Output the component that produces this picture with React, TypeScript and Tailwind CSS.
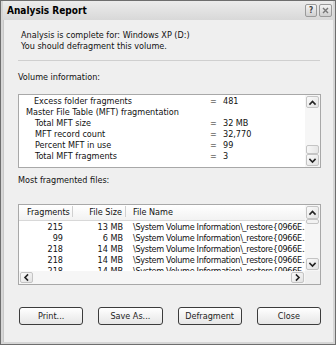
import React from "react";

const FONT = '"DejaVu Sans Condensed", "Liberation Sans", sans-serif';

function Chevron({ dir }: { dir: "up" | "down" | "left" | "right" }) {
  const paths: Record<string, string> = {
    up: "M2 6 L4.5 3.5 L7 6",
    down: "M2 3.5 L4.5 6 L7 3.5",
    left: "M5.5 2 L3 4.5 L5.5 7",
    right: "M3.5 2 L6 4.5 L3.5 7",
  };
  return (
    <svg width="9" height="9" viewBox="0 0 9 9">
      <path d={paths[dir]} fill="none" stroke="#222" strokeWidth="1.6" strokeLinecap="square" />
    </svg>
  );
}

function SBtn({ dir, cls = "" }: { dir: "up" | "down" | "left" | "right"; cls?: string }) {
  return (
    <div
      className={
        "flex items-center justify-center rounded-[2px] border border-[#c4c4c4] bg-gradient-to-br from-[#fbfbfb] to-[#e2e2e2] shrink-0 " +
        cls
      }
    >
      <Chevron dir={dir} />
    </div>
  );
}

const volRows: { label: string; indent: number; value?: string }[] = [
  { label: "Excess folder fragments", indent: 15, value: "481" },
  { label: "Master File Table (MFT) fragmentation", indent: 7 },
  { label: "Total MFT size", indent: 16, value: "32 MB" },
  { label: "MFT record count", indent: 16, value: "32,770" },
  { label: "Percent MFT in use", indent: 16, value: "99" },
  { label: "Total MFT fragments", indent: 16, value: "3" },
];

const files = [
  { frag: "215", size: "13 MB" },
  { frag: "99", size: "6 MB" },
  { frag: "218", size: "14 MB" },
  { frag: "218", size: "14 MB" },
  { frag: "218", size: "14 MB" },
];

function Button({ label }: { label: string }) {
  return (
    <div className="w-[65px] h-[18px] rounded-[3px] border border-[#3c3c3c] bg-gradient-to-b from-[#ffffff] to-[#e6e6e6] flex items-center justify-center text-[#222]">
      {label}
    </div>
  );
}

export default function App() {
  return (
    <div
      className="w-[336px] h-[345px] bg-[#6e6e6e] p-[1px] text-[9px] text-[#111] leading-[11px]"
      style={{ fontFamily: FONT }}
    >
      <div className="w-full h-full flex flex-col bg-[#d6d6d6] px-[2px] pb-[2px]">
        {/* title bar */}
        <div className="h-[19px] flex items-center justify-between pl-[4px] pr-[1px] bg-gradient-to-b from-[#ececec] to-[#d8d8d8] shrink-0">
          <span className="font-bold text-[10px] text-black">Analysis Report</span>
          <div className="flex gap-[2px]">
            <div className="w-[12px] h-[13px] rounded-[2px] border border-[#9a9a9a] bg-gradient-to-b from-[#f4f4f4] to-[#d0d0d0] flex items-center justify-center text-[8px] font-bold text-[#444]">
              ?
            </div>
            <div className="w-[13px] h-[13px] rounded-[2px] border border-[#9a9a9a] bg-gradient-to-b from-[#f4f4f4] to-[#cfcfcf] flex items-center justify-center">
              <svg width="7" height="7" viewBox="0 0 7 7">
                <path d="M1 1 L6 6 M6 1 L1 6" stroke="#777" strokeWidth="1.4" />
              </svg>
            </div>
          </div>
        </div>
        {/* body */}
        <div className="flex-1 flex flex-col bg-[#efefef] pl-[14px] pr-[12px] border-l border-[#c8c8c8]">
          <div className="pl-[3px] mt-[10px]">
            <div>Analysis is complete for: Windows XP (D:)</div>
            <div>You should defragment this volume.</div>
          </div>
          <div className="mt-[8px] h-[1px] bg-[#cfcfcf] mr-[1px]" />
          <div className="mt-[11px]">Volume information:</div>
          {/* volume listbox */}
          <div className="mt-[11px] h-[74px] border border-[#a8a8a8] bg-white flex">
            <div className="flex-1 pt-[1px] overflow-hidden">
              {volRows.map((r, i) => (
                <div key={i} className="flex h-[11px] whitespace-nowrap">
                  <div className="w-[191px] shrink-0" style={{ paddingLeft: r.indent }}>
                    {r.label}
                  </div>
                  {r.value !== undefined && (
                    <>
                      <div className="w-[13px] shrink-0">=</div>
                      <div>{r.value}</div>
                    </>
                  )}
                </div>
              ))}
            </div>
            <div className="w-[15px] flex flex-col bg-[#f6f6f6] p-[1px] gap-0">
              <SBtn dir="up" cls="h-[12px]" />
              <div className="flex-1 flex flex-col justify-end">
                <div className="h-[9px] rounded-[2px] border border-[#c4c4c4] bg-gradient-to-r from-[#f7f7f7] to-[#e6e6e6]" />
              </div>
              <SBtn dir="down" cls="h-[12px]" />
            </div>
          </div>
          <div className="mt-[7px]">Most fragmented files:</div>
          {/* list view */}
          <div className="mt-[18px] h-[81px] border border-[#a8a8a8] bg-white flex flex-col">
            <div className="flex-1 flex min-h-0">
              <div className="flex-1 flex flex-col overflow-hidden">
                <div className="h-[16px] flex items-center border-b border-[#d8d8d8] bg-gradient-to-b from-[#ffffff] to-[#f2f2f2] shrink-0 whitespace-nowrap">
                  <div className="w-[54px] shrink-0 pl-[8px] relative">
                    Fragments
                    <div className="absolute right-0 top-[-1px] h-[11px] w-[1px] bg-[#d0d0d0]" />
                  </div>
                  <div className="w-[53px] shrink-0 pr-[4px] text-right relative">
                    File Size
                    <div className="absolute right-0 top-[-1px] h-[11px] w-[1px] bg-[#d0d0d0]" />
                  </div>
                  <div className="pl-[7px] shrink-0">File Name</div>
                </div>
                <div className="pt-[1px]">
                  {files.map((f, i) => (
                    <div key={i} className="flex h-[11px] whitespace-nowrap">
                      <div className="w-[54px] shrink-0 pr-[10px] text-right">{f.frag}</div>
                      <div className="w-[53px] shrink-0 pr-[3px] text-right">{f.size}</div>
                      <div className="pl-[7px] shrink-0 tracking-[-0.3px]">
                        \System Volume Information\_restore{"{"}0966E...
                      </div>
                    </div>
                  ))}
                </div>
              </div>
              <div className="w-[15px] flex flex-col bg-[#f6f6f6] p-[1px]">
                <SBtn dir="up" cls="h-[13px]" />
                <div className="h-[5px] rounded-[2px] border border-[#c4c4c4] bg-[#f2f2f2]" />
                <div className="flex-1" />
                <SBtn dir="down" cls="h-[12px]" />
              </div>
            </div>
            <div className="h-[13px] flex bg-[#f6f6f6] shrink-0">
              <div className="flex-1 flex p-[1px]">
                <SBtn dir="left" cls="w-[13px]" />
                <div className="flex-1" />
                <SBtn dir="right" cls="w-[13px]" />
              </div>
              <div className="w-[15px] bg-[#efefef]" />
            </div>
          </div>
          {/* buttons */}
          <div className="mt-[22px] flex gap-[15px] pl-[1px]">
            <Button label="Print..." />
            <Button label="Save As..." />
            <Button label="Defragment" />
            <Button label="Close" />
          </div>
        </div>
      </div>
    </div>
  );
}
